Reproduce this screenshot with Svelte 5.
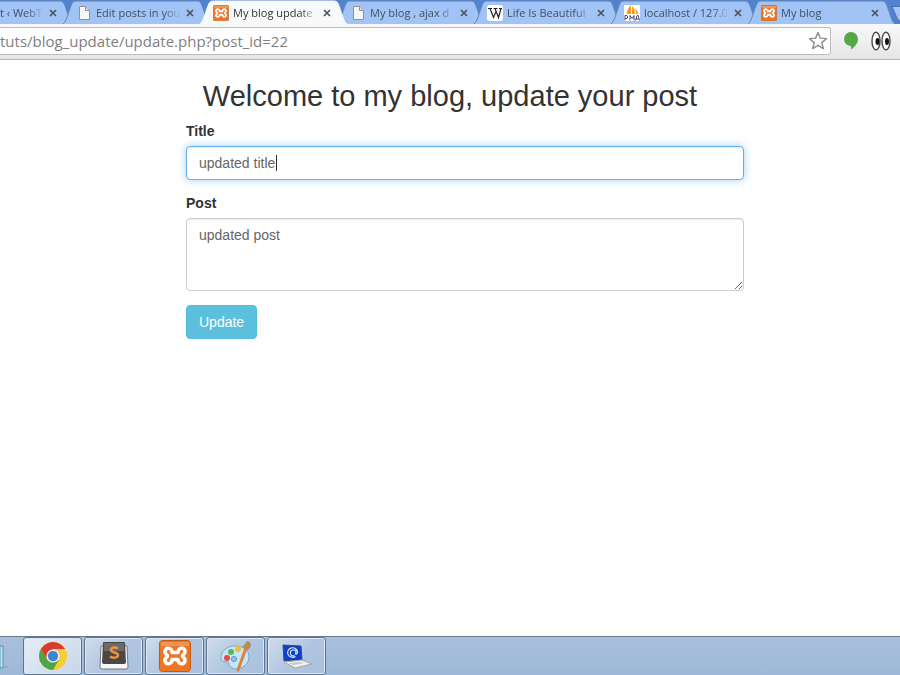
<script>
  const tabs = [
    { title: 'Edit post ‹ WebT', icon: 'page', first: true },
    { title: 'Edit posts in you', icon: 'page' },
    { title: 'My blog update', icon: 'xampp', active: true },
    { title: 'My blog , ajax d', icon: 'page' },
    { title: 'Life Is Beautiful', icon: 'wiki' },
    { title: 'localhost / 127.0', icon: 'pma' },
    { title: 'My blog', icon: 'xampp' }
  ];
  const apps = ['Chrome', 'Sublime Text', 'XAMPP', 'Paint', 'Remote'];
  let title = $state('updated title');
  let post = $state('updated post');
  let url = $state('tuts/blog_update/update.php?post_id=22');
</script>

{#snippet xampp(size)}
  <svg width={size} height={size} viewBox="0 0 32 32" aria-hidden="true">
    <rect x="0.5" y="0.5" width="31" height="31" rx="3" fill="#ee7622" stroke="#bd5a18" />
    <path d="M2 2h28v4H2z" fill="#f4a266" opacity=".7" />
    <path
      d="M13 12.500C13.500 7 5.500 7 6 12C6 14 8.500 14.500 8.500 16C8.500 17.500 6 18 6 20C5.500 25 13.500 25 13 19.500H19C18.500 25 26.500 25 26 20C26 18 23.500 17.500 23.500 16C23.500 14.500 26 14 26 12C26.500 7 18.500 7 19 12.500Z"
      fill="none" stroke="#fff" stroke-width="3.600" stroke-linejoin="round" />
  </svg>
{/snippet}

{#snippet favicon(kind)}
  {#if kind === 'xampp'}
    {@render xampp(16)}
  {:else if kind === 'wiki'}
    <svg width="16" height="16" viewBox="0 0 16 16" aria-hidden="true">
      <rect width="16" height="16" rx="3" fill="#fff" />
      <path d="M1 3.500h4M6.500 3.500h4M12 3.500h3M3 3.500l3.500 9L9 6.500M8 3.500l3.500 9 2.500-9" fill="none" stroke="#222" stroke-width="1.200" />
    </svg>
  {:else if kind === 'pma'}
    <svg width="16" height="16" viewBox="0 0 16 16" aria-hidden="true">
      <rect width="16" height="16" fill="#fff" />
      <path d="M7 0C4 3 3 6 2.500 9H7zM8 1v8h3C11 6 10 3 8 1zM11 3c1 2 1 4 1 6h2c0-2-1-4-3-6z" fill="#f59b16" />
      <path d="M1 15.500v-5h2q1.500 1.500 0 3H1M6 15.500v-5l2 3 2-3v5M11.500 15.500l1.500-5h1l1.500 5M12 14h3" fill="none" stroke="#454572" />
    </svg>
  {:else}
    <svg width="16" height="16" viewBox="0 0 16 16" aria-hidden="true">
      <path d="M3.500 1.500h6l4 4v9h-10z" fill="#f7f7f7" stroke="#8f9296" />
      <path d="M9.500 1.500v4h4" fill="#ddd" stroke="#8f9296" />
    </svg>
  {/if}
{/snippet}

<div class="screen">
  <nav class="tabs" aria-label="Open tabs">
    {#each tabs as tab}
      <div class="tab" class:active={tab.active} class:first={tab.first}>
        <svg class="shape" viewBox="0 0 147 24" preserveAspectRatio="none" aria-hidden="true">
          <path d="M0 24C4 22 7 5 10 2Q11 1 13 1H134Q136 1 137 2C140 5 143 22 147 24" />
        </svg>
        <span class="fav">{@render favicon(tab.icon)}</span>
        <a href="#tab">{tab.title}</a>
        <button aria-label="Close tab">
          <svg width="8" height="8" viewBox="0 0 8 8"><path d="M1 1l6 6M7 1L1 7" stroke="#4c535e" stroke-width="1.700" /></svg>
        </button>
      </div>
    {/each}
    <svg class="new" width="40" height="18" viewBox="0 0 40 18" aria-hidden="true">
      <path d="M1 1.500h38v15H10Q7 16 6 13z" fill="#a4c4f2" stroke="#4a70ad" />
    </svg>
  </nav>

  <header class="toolbar">
    <div class="address">
      <input aria-label="Address" bind:value={url} />
      <button aria-label="Bookmark">
        <svg width="20" height="20" viewBox="0 0 20 20"><path d="M10 1.500l2.400 5.600 6.100.5-4.700 4 1.500 6L10 14.400l-5.300 3.200 1.500-6-4.700-4 6.100-.5z" fill="#fff" stroke="#8d8d8d" stroke-width="1.400" stroke-linejoin="round" /></svg>
      </button>
    </div>
    <button aria-label="Hangouts">
      <svg width="16" height="20" viewBox="0 0 16 20"><path d="M8 1a7 7 0 0 1 7 7c0 4-3 8-7 10.500V15A7 7 0 0 1 8 1z" fill="#55a844" /></svg>
    </button>
    <button aria-label="Eyes">
      <svg width="20" height="20" viewBox="0 0 20 20">
        <g fill="#fff" stroke="#4a4a4a" stroke-width="1.400"><ellipse cx="5" cy="10" rx="4" ry="8.800" /><ellipse cx="15" cy="10" rx="4" ry="8.800" /></g>
        <ellipse cx="6.500" cy="10.500" rx="2" ry="3.500" fill="#111" /><ellipse cx="16" cy="10.500" rx="2" ry="3.500" fill="#111" />
      </svg>
    </button>
  </header>

  <main>
    <h2>Welcome to my blog, update your post</h2>
    <form onsubmit={(e) => e.preventDefault()}>
      <label for="title">Title</label>
      <div class="field">
        <input id="title" class="control focused" bind:value={title} />
        <span class="caret"></span>
      </div>
      <label for="post">Post</label>
      <textarea id="post" class="control" bind:value={post}></textarea>
      <button class="update">Update</button>
    </form>
  </main>

  <footer class="taskbar">
    <svg class="peek" width="8" height="28" viewBox="0 0 8 28" aria-hidden="true">
      <path d="M0 3h3v22H0z" fill="#c7e6f3" stroke="#4d91b4" /><path d="M4 24h4" stroke="#7e9dba" />
    </svg>
    {#each apps as app, i}
      <button class="app" class:open={i === 0} aria-label={app}>
        {#if i === 0}
          <svg width="30" height="30" viewBox="0 0 30 30">
            <circle cx="15" cy="15" r="14" fill="#f7cd35" />
            <path d="M2.900 8A14 14 0 0 1 27.100 8H15L9 18.500z" fill="#d93b2e" />
            <path d="M2.900 8A14 14 0 0 0 15 29L21 18.500 9 18.500z" fill="#4fa447" />
            <circle cx="15" cy="15" r="6.600" fill="#f3f3f1" /><circle cx="15" cy="15" r="5.200" fill="#4386ce" />
          </svg>
        {:else if i === 1}
          <svg width="32" height="30" viewBox="0 0 32 30">
            <path d="M3 5h26l1 21q0 2-2 2H4q-2 0-2-2z" fill="#f8f8f8" stroke="#777" />
            <path d="M5 2q0-1 1-1h20q1 0 1 1l1 19q0 2-2 2H6q-2 0-2-2z" fill="#484848" /><path d="M6 2h20v8H6z" fill="#6a6a6a" />
            <path d="M20 7.500c-2-1.500-7-1.500-7 1.500s7 2 7 5-5 3.500-8 1.500" fill="none" stroke="#f79238" stroke-width="2.400" />
          </svg>
        {:else if i === 2}
          {@render xampp(32)}
        {:else if i === 3}
          <svg width="34" height="32" viewBox="0 0 34 32">
            <path d="M17 6C8 5 1 12 2 19c1 4 5 2 7 3s0 4 4 6c6 3 17-2 17-11C30 10 24 6 17 6z" fill="#c8e5f7" stroke="#75a9cf" />
            <circle cx="12" cy="12" r="3" fill="#54b858" /><circle cx="19" cy="9" r="3" fill="#f3bd31" /><circle cx="8" cy="18" r="3" fill="#e05045" /><circle cx="15" cy="19" r="2.600" fill="#8fc1e8" stroke="#5e9bcf" />
            <path d="M27 8L19 30" stroke="#df8238" stroke-width="3" stroke-linecap="round" /><path d="M24 8c0-4 3-4 4-7 5 1 5 6 1 9z" fill="#b98956" />
          </svg>
        {:else}
          <svg width="34" height="28" viewBox="0 0 34 28">
            <path d="M3 3l18 1 1 14-18 1z" fill="#0e3fc4" stroke="#334c79" />
            <path d="M14.500 13.500q-3.500 1.500-4-2t3-3.500 2 4q2 .5 2-2.500a5 4.800 0 1 0-2 5" fill="none" stroke="#d9e8ff" stroke-width="1.200" />
            <path d="M4 20l18-2 10 4-17 4z" fill="#f0f0f0" stroke="#a2a6ac" /><path d="M8 21l12-1 4 1-11 2z" fill="#c4c8cd" />
          </svg>
        {/if}
      </button>
    {/each}
  </footer>
</div>

<style>
  :global(body) { background: #fff; }
  * { box-sizing: border-box; }
  button { font: inherit; border: 0; background: none; padding: 0; }
  svg { display: block; flex: none; }
  .screen { min-height: 100vh; display: flex; flex-direction: column; overflow: hidden; font-family: 'Liberation Sans', Arial, sans-serif; }
  .tabs { display: flex; height: 24px; background: #5182d0; overflow: hidden; font: 11px/16px 'Open Sans', sans-serif; }
  .tab { position: relative; flex: none; display: flex; align-items: center; width: 147px; height: 24px; margin-right: -10px; padding: 1px 16px 0 13px; isolation: isolate; }
  .first { margin-left: -74px; }
  .active { z-index: 2; }
  .shape { position: absolute; inset: 0; width: 100%; height: 100%; z-index: -1; }
  .shape path { fill: #a1c3f5; stroke: #6487b8; }
  .active .shape path { fill: #f8f9fa; stroke: #f8f9fa; }
  .fav { width: 20px; flex: none; }
  .tab a { flex: 1; min-width: 0; overflow: hidden; white-space: nowrap; color: #444f61; text-decoration: none; mask-image: linear-gradient(90deg, #000 80%, transparent); }
  .active a { color: #333; }
  .tab button { margin-left: 5px; }
  .new { margin: 5px 0 0 6px; }
  .toolbar { display: flex; align-items: center; height: 36px; gap: 12px; padding: 0 9px 1px 0; background: linear-gradient(#f8f9fa, #e5e5e5); border-bottom: 1px solid #b5b5b5; }
  .address { flex: 1; display: flex; align-items: center; height: 28px; background: #fff; border: 1px solid #bdbdbd; border-left: 0; border-radius: 0 3px 3px 0; padding-right: 2px; }
  .address input { flex: 1; min-width: 0; border: 0; outline: 0; padding: 0; background: none; color: #808080; font: 15px/24px 'Open Sans', sans-serif; }
  main { flex: 1; }
  h2 { margin: 20px 0 8px; text-align: center; font-size: 29px; line-height: 33px; font-weight: 400; color: #333; }
  form { margin: 0 156px 0 186px; font-size: 14px; line-height: 20px; color: #333; }
  label { display: block; font-weight: 700; margin-bottom: 5px; }
  .field { position: relative; margin-bottom: 13px; }
  .control { display: block; width: 100%; height: 34px; padding: 6px 12px; border: 1px solid #ccc; border-radius: 4px; background: #fff; color: #666; font: 14px/20px 'Liberation Sans', Arial, sans-serif; box-shadow: inset 0 1px 1px rgba(0, 0, 0, 0.075); outline: 0; }
  .focused { border-color: #66afe9; box-shadow: inset 0 1px 1px rgba(0, 0, 0, 0.075), 0 0 8px rgba(102, 175, 233, 0.6); }
  .caret { position: absolute; left: 90px; top: 9px; width: 1px; height: 16px; background: #333; }
  textarea.control { height: 73px; resize: vertical; }
  .update { display: block; margin-top: 14px; height: 34px; padding: 0 12px; border: 1px solid #55bcdc; border-radius: 4px; background: #5bc0de; color: #fff; }
  .taskbar { display: flex; height: 39px; align-items: stretch; gap: 2px; background: linear-gradient(#a9c0dc, #9db8d8); border-top: 1px solid #65788e; }
  .peek { margin: 6px 13px 0 0; }
  .app { display: flex; align-items: center; justify-content: center; width: 59px; border: 1px solid #5f748e; border-radius: 3px; background: linear-gradient(135deg, #cfdcec, #b0c5df 55%, #a9c1de); box-shadow: inset 0 0 0 1px #dce7f3; }
  .open { background: linear-gradient(135deg, #e6edf6, #c7d6e9); }
</style>
